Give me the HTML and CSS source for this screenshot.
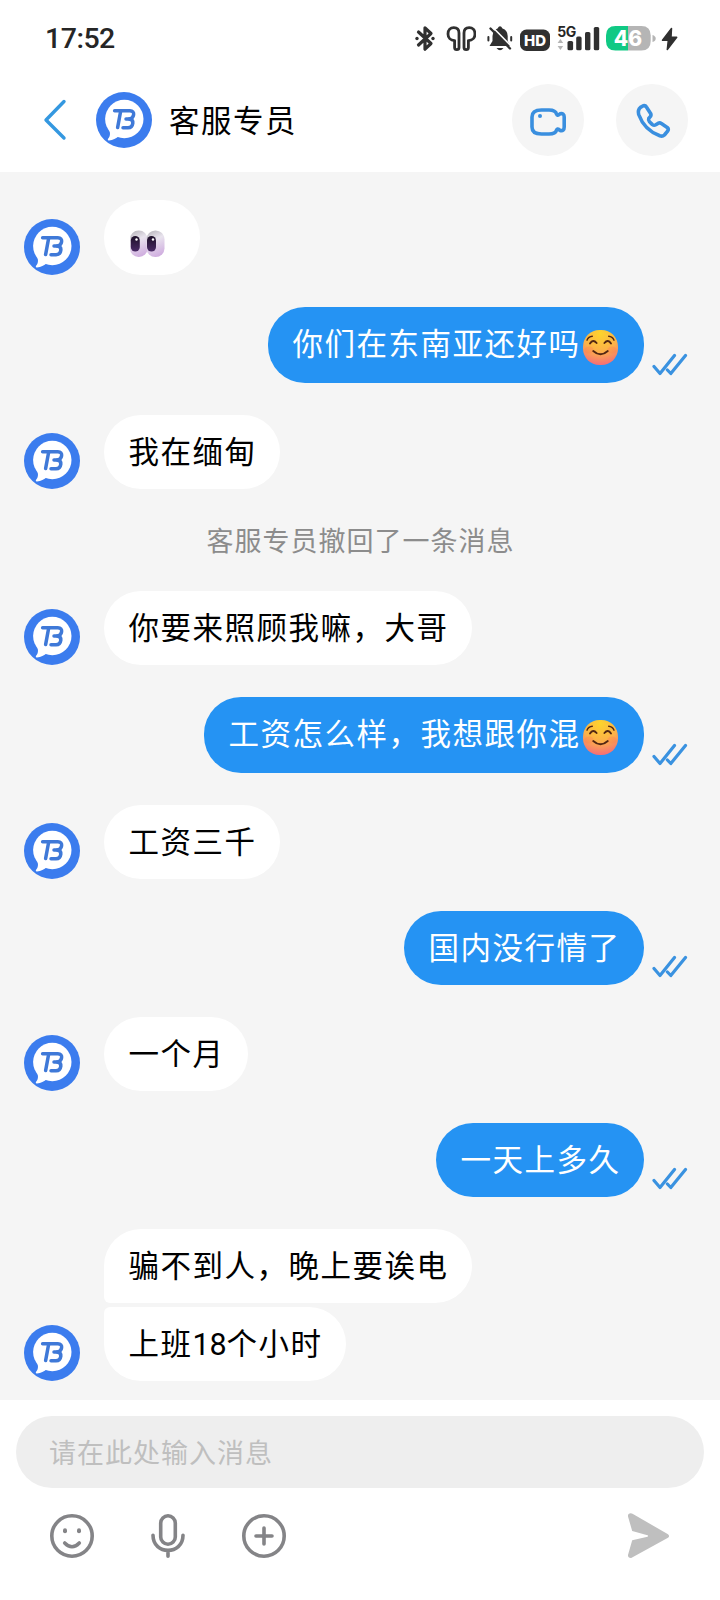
FILE: index.html
```html
<!DOCTYPE html>
<html lang="zh-CN">
<head>
<meta charset="utf-8">
<title>客服专员</title>
<link rel="stylesheet" href="styles.css">
</head>
<body>
<svg class="defs" width="0" height="0" aria-hidden="true">
  <defs>
    <radialGradient id="face" cx="50%" cy="10%" r="95%">
      <stop offset="0" stop-color="#fdd42c"/><stop offset=".55" stop-color="#fcb04a"/><stop offset="1" stop-color="#f5657c"/>
    </radialGradient>
    <linearGradient id="eyeball" x1=".3" y1="0" x2=".6" y2="1">
      <stop offset="0" stop-color="#bdbac0"/><stop offset=".35" stop-color="#e9e4ee"/><stop offset="1" stop-color="#cfacdf"/>
    </linearGradient>
    <linearGradient id="pupil" x1="0" y1="0" x2="0" y2="1">
      <stop offset="0" stop-color="#1d1028"/><stop offset="1" stop-color="#4a2a66"/>
    </linearGradient>
    <symbol id="logo" viewBox="0 0 56 56">
      <circle cx="28" cy="28" r="28" fill="#3b7cee"/>
      <circle cx="28.3" cy="27" r="19.2" fill="#fff"/>
      <path d="M13 38C15 42 13.6 45 11.8 47.2Q11.6 48.4 13 48.4C17 48.2 20 46.4 23 44Z" fill="#fff"/>
      <g fill="none" stroke="#3f79d8" stroke-width="3.5" stroke-linecap="round" stroke-linejoin="round">
        <path d="M18.6 18.8H33.8Q38.2 19 37.6 22.8Q37 26.8 33.2 27H30"/>
        <path d="M24.6 19.5L21.6 35.6"/>
        <path d="M33.2 27Q37.3 27.6 36.8 31.2Q36.2 35.6 32 35.8H27"/>
      </g>
    </symbol>
    <symbol id="ticks" viewBox="0 0 36 24">
      <path d="M2 13.5L8 20.5L22.5 2.5M15.4 17L18.8 20.5L33.5 2.5" fill="none" stroke="#3a92e0" stroke-width="3.2" stroke-linecap="round" stroke-linejoin="round"/>
    </symbol>
    <symbol id="smile" viewBox="0 0 35 35">
      <rect x="0" y="0" width="35" height="35" rx="16.5" fill="url(#face)"/>
      <ellipse cx="6" cy="20" rx="4.5" ry="3.5" fill="#ff7650" opacity=".3"/>
      <ellipse cx="29" cy="20" rx="4.5" ry="3.5" fill="#ff7650" opacity=".3"/>
      <g fill="none" stroke="#532713" stroke-linecap="round">
        <path d="M4 10.2Q5.5 6.7 9.3 6.3M25.7 6.3Q29.5 6.7 31 10.2" stroke-width="1.4"/>
        <path d="M7 13.5Q10 8.7 13.6 13M21.4 13Q25 8.7 28 13.5" stroke-width="1.9"/>
        <path d="M10.2 21Q17.5 27.6 24.8 21" stroke-width="1.8"/>
      </g>
    </symbol>
  </defs>
</svg>

<div class="phone">
  <div class="status">
    <span class="time">17:52</span>
    <div class="indicators">
      <svg class="i-bt" viewBox="415 25 20 27" width="20" height="27"><path d="M418.5 32L431 43.5L425 49.2V27.8L431 33.5L418.5 45" fill="none" stroke="#303030" stroke-width="3.2" stroke-linejoin="round" stroke-linecap="round"/><circle cx="417" cy="38.5" r="1.7" fill="#303030"/><circle cx="433" cy="38.5" r="1.7" fill="#303030"/></svg>
      <svg class="i-buds" viewBox="446 25 30 27" width="30" height="27"><g fill="none" stroke="#303030" stroke-width="2.8" stroke-linejoin="round"><path d="M459 33V47.5Q459 49.7 456.8 49.7Q454.6 49.7 454.6 47.5V40.6C450.5 40.6 448 37.5 448 34C448 30 450.5 27.6 453.8 27.6Q459 27.6 459 33Z"/><path d="M464 33V47.5Q464 49.7 466.2 49.7Q468.4 49.7 468.4 47.5V40.6C472.5 40.6 475 37.5 475 34C475 30 472.5 27.6 469.2 27.6Q464 27.6 464 33Z"/></g></svg>
      <svg class="i-bell" viewBox="487 25 26 27" width="26" height="27"><path d="M489.5 46L492.5 41V36Q493 30 497.5 28.5Q500 24 502.5 28.5Q507.5 30 507.7 36V41L510.5 46Z" fill="#303030"/><path d="M496.5 48H503.5Q500 52.5 496.5 48Z" fill="#303030"/><path d="M492.2 26.8L512 47" stroke="#fff" stroke-width="1.6"/><path d="M490.5 28.5L510 48.5" stroke="#303030" stroke-width="2.4" stroke-linecap="round"/><path d="M488.4 37V40.5M511.2 37V40.5" stroke="#303030" stroke-width="2" stroke-linecap="round"/></svg>
      <svg class="i-hd" viewBox="520 25 30 27" width="30" height="27"><rect x="520" y="29.5" width="30" height="21.5" rx="6.5" fill="#303030"/><text x="535" y="46" text-anchor="middle" class="hd-text">HD</text></svg>
      <svg class="i-net" viewBox="556 21 44 31" width="44" height="31"><text x="557.2" y="36.6" class="net-text">5G</text><g fill="#303030"><rect x="567.5" y="41" width="5.6" height="9.3" rx="1.6"/><rect x="576.2" y="36.5" width="5.4" height="13.8" rx="1.6"/><rect x="585" y="32" width="5.4" height="18.3" rx="1.6"/><rect x="593.8" y="27" width="5.4" height="23.3" rx="1.6"/></g><path d="M560.4 39L563.2 43H557.6ZM560.4 50L563.2 46H557.6Z" fill="#b5b5b5"/></svg>
      <svg class="i-bat" viewBox="606 25 51 27" width="51" height="27"><path d="M615.5 26H628V50.5H615.5Q606 50.5 606 41V35.5Q606 26 615.5 26Z" fill="#10c984"/><path d="M628 26H641.3Q650.7 26 650.7 35.5V41Q650.7 50.5 641.3 50.5H628Z" fill="#b5b5b5"/><path d="M652.5 35Q655.7 36 655.7 38.5Q655.7 41 652.5 42Z" fill="#b5b5b5"/><text x="628" y="46" text-anchor="middle" class="bat-text">46</text></svg>
      <svg class="i-bolt" viewBox="661 25 17 27" width="17" height="27"><path d="M671.5 28.5L662.5 40.3H668.3L667.3 49.5L676.7 37.3H671Z" fill="#303030" stroke="#303030" stroke-width="1.5" stroke-linejoin="round"/></svg>
    </div>
  </div>

  <header class="header">
    <svg class="back" viewBox="0 0 24 42" width="24" height="42"><path d="M21 2.5L3 21L21 39" fill="none" stroke="#3498e0" stroke-width="3.4" stroke-linecap="round" stroke-linejoin="round"/></svg>
    <svg class="avatar head-avatar"><use href="#logo"/></svg>
    <h1 class="title">客服专员</h1>
    <div class="calls">
      <button class="call"><svg viewBox="0 0 72 72" width="72" height="72"><g fill="none" stroke="#3a8fdf" stroke-width="3.6" stroke-linejoin="round"><path d="M29.5 26H37Q43.5 26 44.6 30.2Q45.3 32 47 30.6L48 29.8Q52.2 28.8 52.2 33V43Q52.2 47.5 48 46.4L47 45.5Q45.3 44.2 44.6 46Q43.5 50 37 50H29.5Q20 50 20 43V33Q20 26 29.5 26Z"/></g><circle cx="28" cy="32" r="2" fill="#3a8fdf"/></svg></button>
      <button class="call"><svg viewBox="0 0 72 72" width="72" height="72"><path d="M24.5 23.4L27.3 21.8Q29.3 21.2 30.4 23L34.6 29.4Q35.6 31.4 34 33L32.8 34.2Q32 36 33.5 37.8L36.4 40.6Q38 41.8 39.8 40.8L42.3 39.2Q44 38.5 45.4 39.6L51.2 43.5Q53 45 51.8 46.9L48.4 51Q46.6 52.6 43.8 51.8C33.5 48 26.3 40.5 22.7 30.5Q21.5 26 24.5 23.4Z" fill="none" stroke="#3a8fdf" stroke-width="3.6" stroke-linejoin="round"/></svg></button>
    </div>
  </header>

  <main class="chat">
    <div class="row in"><svg class="avatar"><use href="#logo"/></svg><div class="bubble eyes-bubble"><svg class="eyes" viewBox="0 0 35 28" role="img" aria-label="眼睛"><rect x="0" y=".5" width="17.5" height="26.5" rx="8.5" fill="url(#eyeball)"/><rect x="16.5" y=".5" width="18" height="26.5" rx="8.8" fill="url(#eyeball)"/><rect x=".8" y="6" width="9" height="15.5" rx="4.5" fill="url(#pupil)"/><rect x="17" y="6" width="9" height="15.5" rx="4.5" fill="url(#pupil)"/><circle cx="6.5" cy="9.5" r="1.2" fill="#fff"/><circle cx="23" cy="9.5" r="1.2" fill="#fff"/></svg></div></div>
    <div class="row out"><div class="bubble with-emoji">你们在东南亚还好吗<svg class="emoji"><use href="#smile"/></svg></div><svg class="ticks"><use href="#ticks"/></svg></div>
    <div class="row in"><svg class="avatar"><use href="#logo"/></svg><div class="bubble">我在缅甸</div></div>
    <p class="notice">客服专员撤回了一条消息</p>
    <div class="row in"><svg class="avatar"><use href="#logo"/></svg><div class="bubble">你要来照顾我嘛，大哥</div></div>
    <div class="row out"><div class="bubble with-emoji">工资怎么样，我想跟你混<svg class="emoji"><use href="#smile"/></svg></div><svg class="ticks"><use href="#ticks"/></svg></div>
    <div class="row in"><svg class="avatar"><use href="#logo"/></svg><div class="bubble">工资三千</div></div>
    <div class="row out"><div class="bubble">国内没行情了</div><svg class="ticks"><use href="#ticks"/></svg></div>
    <div class="row in"><svg class="avatar"><use href="#logo"/></svg><div class="bubble">一个月</div></div>
    <div class="row out"><div class="bubble">一天上多久</div><svg class="ticks"><use href="#ticks"/></svg></div>
    <div class="row in"><svg class="avatar"><use href="#logo"/></svg><div class="group"><div class="bubble first">骗不到人，晚上要诶电</div><div class="bubble last">上班<span class="digits">18</span>个小时</div></div></div>
  </main>

  <footer class="composer">
    <div class="input">请在此处输入消息</div>
    <div class="tools">
      <svg viewBox="0 0 48 48" width="48" height="48"><g fill="none" stroke="#848487" stroke-width="3.6" stroke-linecap="round"><circle cx="24" cy="24" r="20.2"/><path d="M16.7 31Q24 38.6 31.3 31"/></g><rect x="15" y="16.3" width="4" height="5" rx="2" fill="#848487"/><rect x="29" y="16.3" width="4" height="5" rx="2" fill="#848487"/></svg>
      <svg viewBox="0 0 48 48" width="48" height="48"><g fill="none" stroke="#848487" stroke-width="3.6" stroke-linecap="round"><rect x="16.7" y="3.8" width="14.6" height="28.4" rx="7.3"/><path d="M9 23.2C9 43.4 39 43.4 39 23.2M24 38.5V44.3"/></g></svg>
      <svg viewBox="0 0 48 48" width="48" height="48"><g fill="none" stroke="#848487" stroke-width="3.6" stroke-linecap="round"><circle cx="24" cy="24" r="20.2"/><path d="M24 16V32M16 24H32"/></g></svg>
      <svg class="send" viewBox="0 0 48 48" width="48" height="48"><path d="M6.8 1.3Q3.6 1.3 4 4.5L8.2 19L23.5 23.3Q24.8 24 23.5 24.7L8.2 28.3L4 43Q3.8 46.2 7.2 46L44 25.8Q46.2 24 44 22.2L8.5 1.8Z" fill="#bfbfbf"/></svg>
    </div>
  </footer>
</div>
</body>
</html>
```
FILE: styles.css
```css
* { box-sizing: border-box; }
body {
  margin: 0;
  background: #fff;
  font-family: "Noto Sans CJK SC", sans-serif;
  color: #000;
}
.defs { position: absolute; }
.phone { width: 720px; height: 1600px; display: flex; flex-direction: column; }

.status { height: 76px; display: flex; padding-left: 45px; }
.time { width: 370px; padding-top: 1px; font: 500 28.5px/76px Roboto, sans-serif; letter-spacing: -.5px; color: #262626; }
.indicators { display: flex; padding-top: 25px; }
.i-buds { margin-left: 11px; }
.i-bell { margin-left: 11px; }
.i-hd { margin-left: 7px; }
.i-net { margin: -4px 0 0 6px; }
.i-bat { margin-left: 6px; }
.i-bolt { margin-left: 4px; }
.hd-text { font: 800 15px Inter, sans-serif; fill: #fff; }
.net-text { font: 700 14px Inter, sans-serif; fill: #262626; letter-spacing: -.3px; }
.bat-text { font: 800 21px Inter, sans-serif; fill: #fff; }

.header { height: 96px; display: flex; align-items: center; padding: 0 32px 8px 43px; }
.avatar { width: 56px; height: 56px; flex: none; display: block; }
.head-avatar { margin-left: 29px; }
.title { margin: 0 0 0 17px; font-size: 30.5px; font-weight: 400; letter-spacing: 1.5px; line-height: 56px; padding-bottom: 3px; }
.calls { margin-left: auto; display: flex; gap: 32px; height: 80px; align-items: center; }
.call { width: 72px; height: 72px; padding: 0; border: 0; border-radius: 50%; background: #f5f5f5; }
.call svg { display: block; }

.chat { height: 1228px; padding: 28px 32px 0 24px; background: #f5f5f5; display: flex; flex-direction: column; gap: 32px; }
.row { display: flex; align-items: flex-end; }
.in { gap: 24px; }
.out { justify-content: flex-end; gap: 8px; }
.bubble {
  height: 74px;
  padding: 0 23.5px 0 24.5px;
  border-radius: 37px;
  background: #fff;
  font-size: 30.5px;
  letter-spacing: 1.5px;
  line-height: 70px;
  white-space: nowrap;
}
.digits { font-family: Roboto, sans-serif; letter-spacing: -.2px; }
.out .bubble { background: #2593f3; color: #fff; }
.out .with-emoji { height: 76px; display: flex; }
.emoji { width: 35px; height: 35px; margin: 23px 3px 0 2px; }
.eyes-bubble { width: 96px; height: 75px; padding: 30px 0 0 26px; }
.eyes { width: 35px; height: 28px; display: block; }
.ticks { width: 36px; height: 24px; margin-bottom: 6px; }
.notice { margin: 0; height: 38px; text-align: center; font-size: 27px; letter-spacing: 1px; line-height: 38px; color: #8c8c8c; padding-left: 9px; }
.group { display: flex; flex-direction: column; align-items: flex-start; gap: 4px; }
.first { border-bottom-left-radius: 6px; }
.last { border-top-left-radius: 6px; }

.composer { padding: 16px 16px 0; }
.input { height: 72px; padding-left: 33px; border-radius: 36px; background: #eee; color: #bfbfbf; font-size: 27px; letter-spacing: 1px; line-height: 71px; }
.tools { display: flex; gap: 48px; padding: 24px 32px 0 32px; }
.send { margin-left: auto; }
```
